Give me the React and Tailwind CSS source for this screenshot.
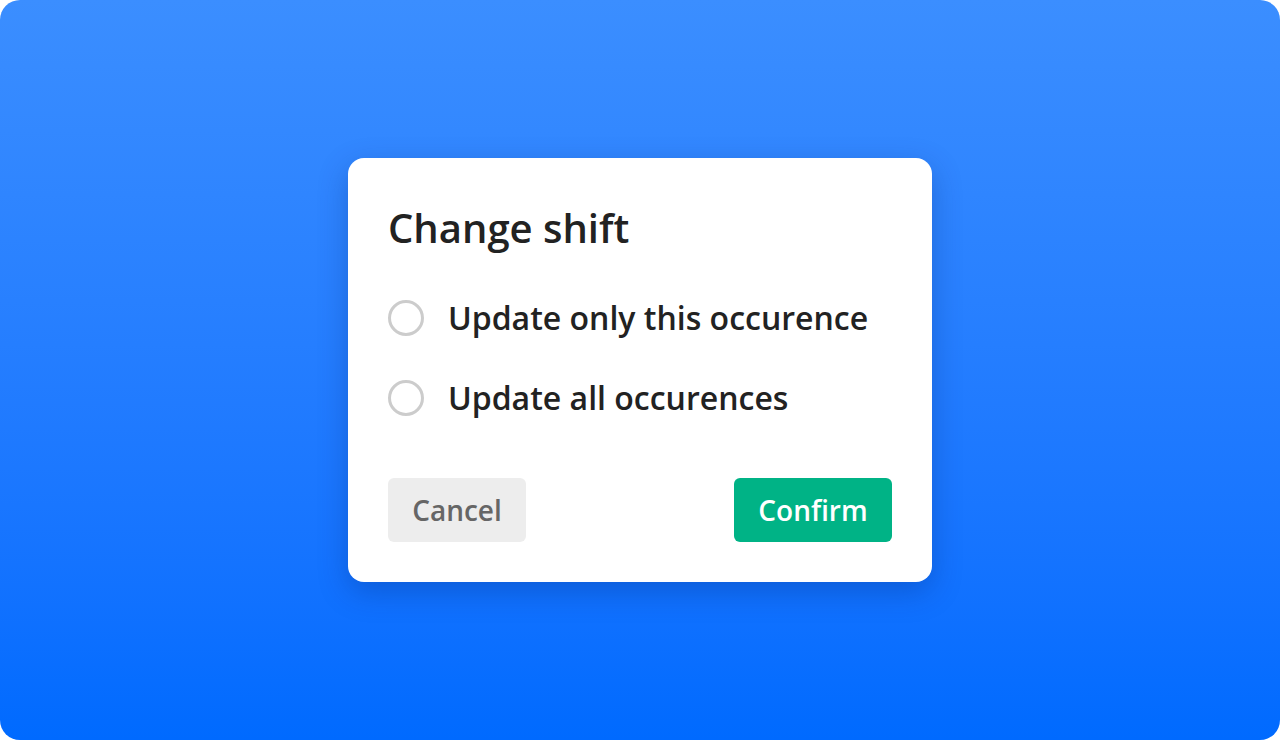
import React from "react";

const Radio = ({ label }) => (
  <label className="flex items-center gap-[24px] h-[40px]">
    <span className="w-[36px] h-[36px] rounded-full border-[3px] border-[#cccccc] bg-white flex-shrink-0" />
    <span className="text-[32px] font-semibold text-[#222222] leading-none">
      {label}
    </span>
  </label>
);

export default function App() {
  return (
    <div
      className="w-[1280px] h-[740px] bg-white"
      style={{ fontFamily: '"Open Sans", "Noto Sans", sans-serif' }}
    >
      <div className="w-full h-full rounded-[20px] bg-gradient-to-b from-[#3b8eff] to-[#006aff] flex items-center justify-center">
        <div className="w-[584px] h-[424px] bg-white rounded-[16px] shadow-[0_10px_30px_rgba(0,40,120,0.3)] px-[40px] pt-[50px] pb-[40px] flex flex-col">
          <h1 className="text-[40px] font-semibold text-[#222222] leading-none">
            Change shift
          </h1>

          {/* Options */}
          <div className="mt-[50px] flex flex-col gap-[40px]">
            <Radio label="Update only this occurence" />
            <Radio label="Update all occurences" />
          </div>

          <div className="mt-auto flex justify-between">
            <button className="w-[138px] h-[64px] rounded-[6px] bg-[#ededed] text-[#666666] text-[28px] font-semibold">
              Cancel
            </button>
            <button className="w-[158px] h-[64px] rounded-[6px] bg-[#00b386] text-white text-[28px] font-semibold">
              Confirm
            </button>
          </div>
        </div>
      </div>
    </div>
  );
}
